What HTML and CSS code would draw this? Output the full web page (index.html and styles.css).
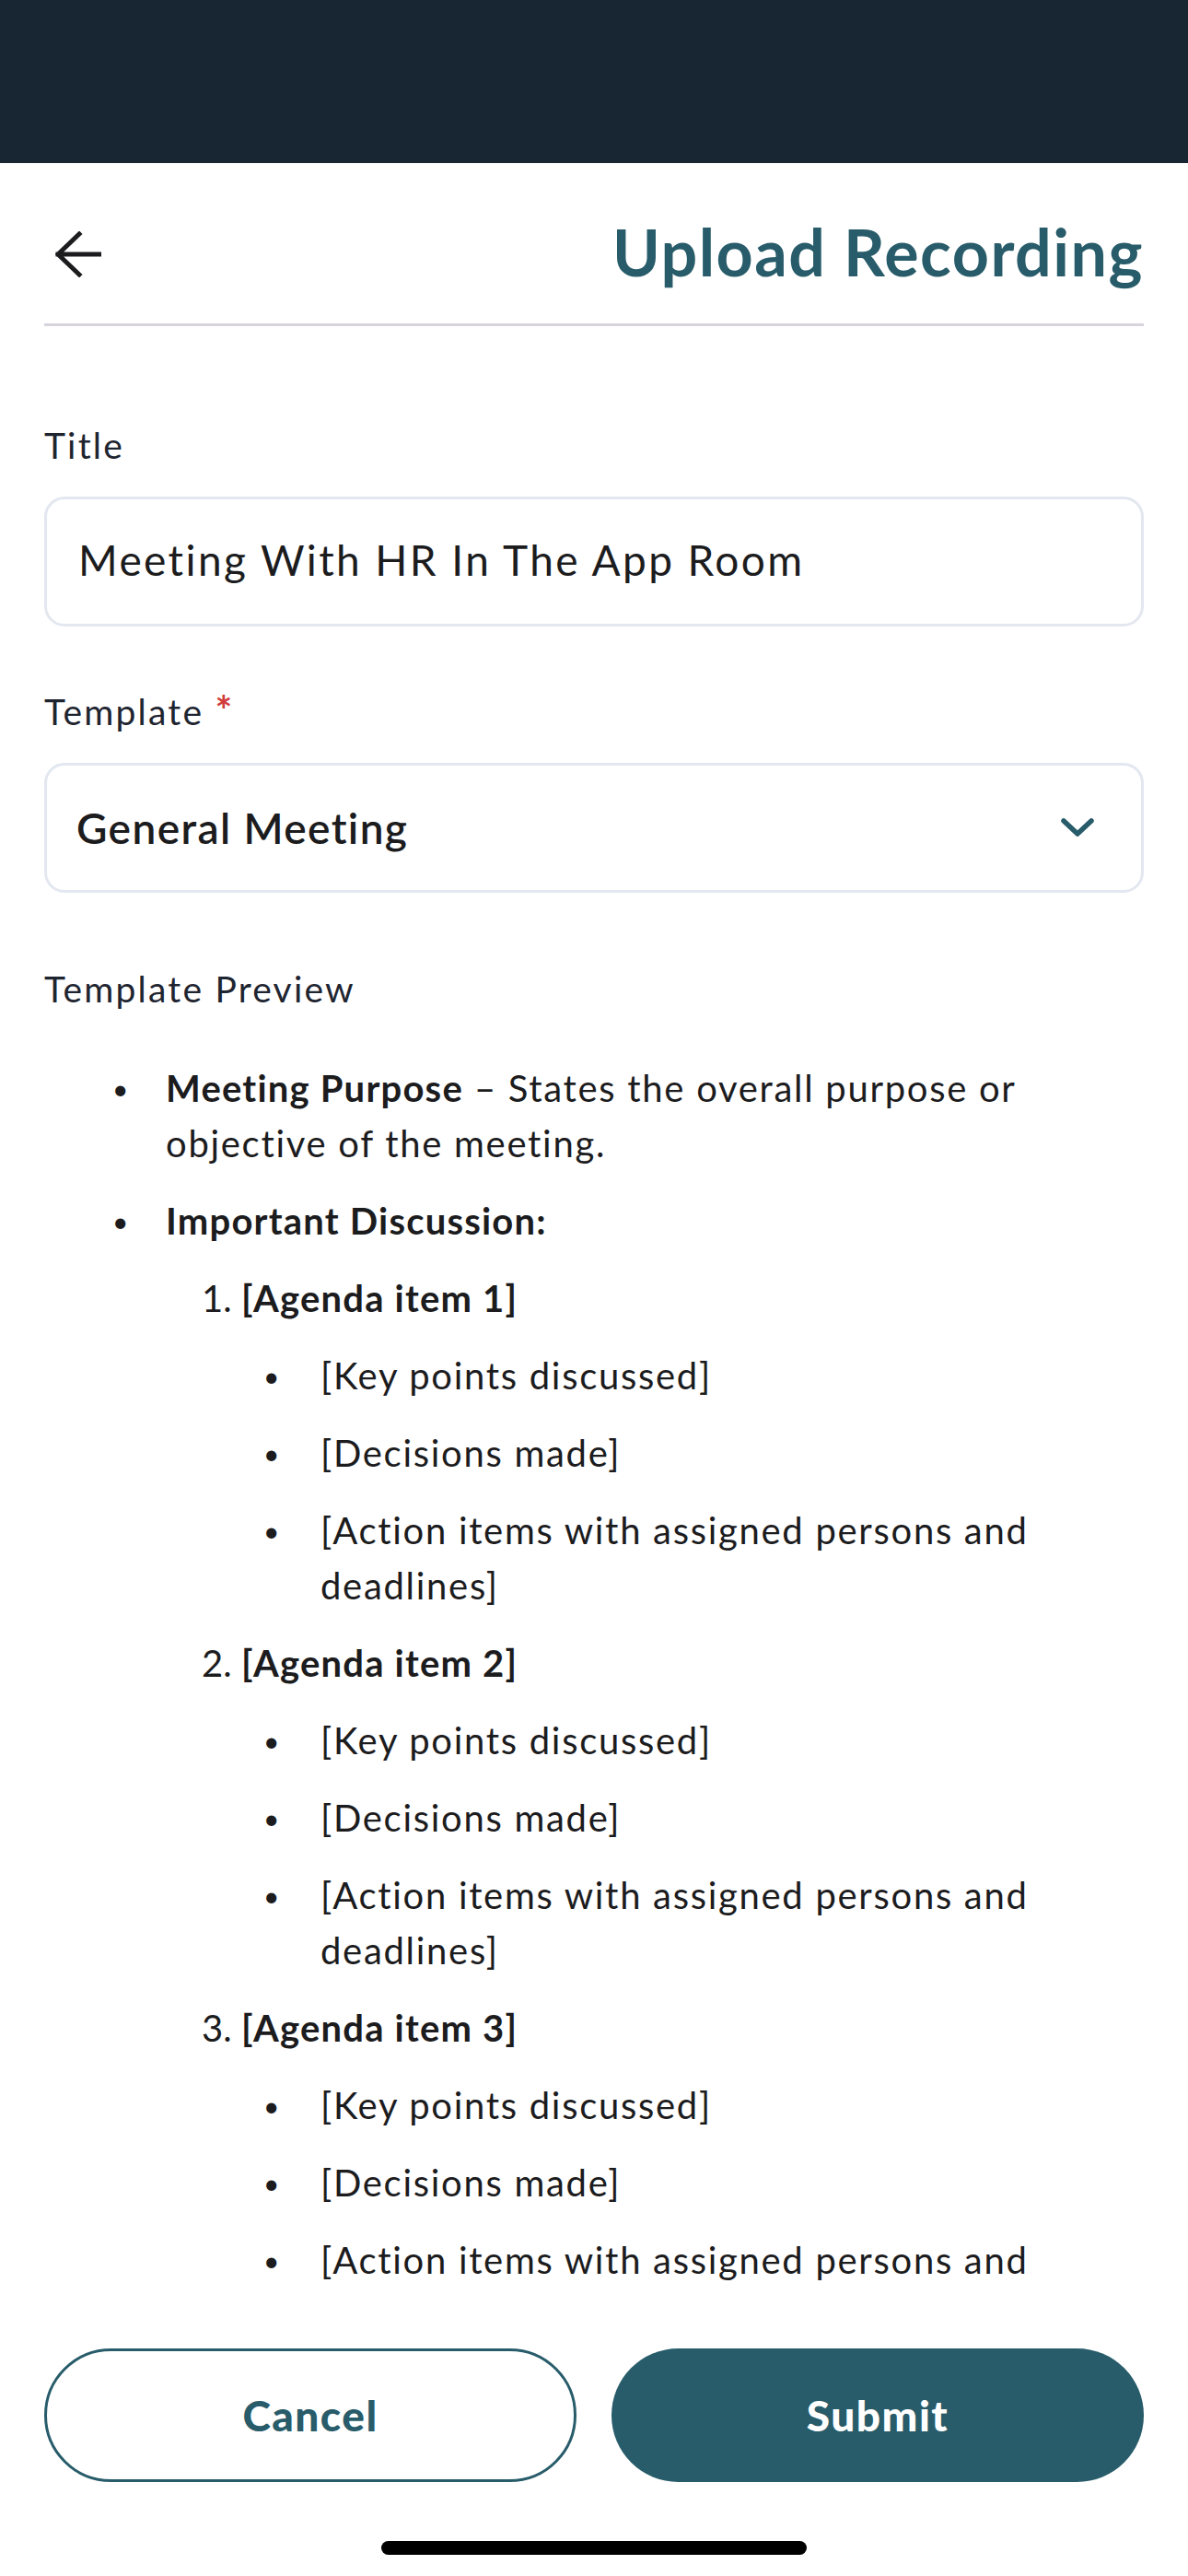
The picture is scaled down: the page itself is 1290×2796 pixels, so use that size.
FILE: index.html
```
<!DOCTYPE html>
<html lang="en">
<head>
<meta charset="utf-8">
<title>Upload Recording</title>
<link rel="stylesheet" href="styles.css">
</head>
<body>
<div class="screen">
  <div class="statusbar"></div>
  <div class="scroll">
    <header class="topbar">
      <button class="back" aria-label="Back">
        <svg width="50" height="50" viewBox="0 0 50 50"><path d="M26 3 L3 25 L26 47 M3 25 H49" fill="none" stroke="#1c1c1e" stroke-width="5" stroke-linecap="square" stroke-linejoin="miter"/></svg>
      </button>
      <h1 class="page-title">Upload Recording</h1>
    </header>
    <section class="form">
      <label class="label">Title</label>
      <div class="field">Meeting With HR In The App Room</div>
      <label class="label label-gap">Template <span class="req">*</span></label>
      <div class="field select">
        <span class="select-value">General Meeting</span>
        <svg class="chev" width="40" height="26" viewBox="0 0 40 26"><path d="M5 5 L20 19 L35 5" fill="none" stroke="#285c6a" stroke-width="5.5" stroke-linecap="round" stroke-linejoin="round"/></svg>
      </div>
      <div class="label preview-label">Template Preview</div>
      <ul class="preview">
        <li><b>Meeting Purpose</b> – States the overall purpose or objective of the meeting.</li>
        <li><b>Important Discussion:</b>
          <ol class="agenda">
            <li><b>[Agenda item 1]</b>
              <ul class="sub">
                <li>[Key points discussed]</li>
                <li>[Decisions made]</li>
                <li>[Action items with assigned persons and deadlines]</li>
              </ul>
            </li>
            <li><b>[Agenda item 2]</b>
              <ul class="sub">
                <li>[Key points discussed]</li>
                <li>[Decisions made]</li>
                <li>[Action items with assigned persons and deadlines]</li>
              </ul>
            </li>
            <li><b>[Agenda item 3]</b>
              <ul class="sub">
                <li>[Key points discussed]</li>
                <li>[Decisions made]</li>
                <li>[Action items with assigned persons and deadlines]</li>
              </ul>
            </li>
          </ol>
        </li>
      </ul>
    </section>
  </div>
  <footer class="footer">
    <div class="actions">
      <button class="btn btn-outline">Cancel</button>
      <button class="btn btn-fill">Submit</button>
    </div>
    <div class="home-indicator"></div>
  </footer>
</div>
</body>
</html>
```
FILE: styles.css
```
* { box-sizing: border-box; }
html, body { margin: 0; padding: 0; background: #ffffff; }
body {
  font-family: "Lato", "Liberation Sans", sans-serif;
  color: #1c1c1e;
}
.screen {
  width: 1290px;
  height: 2796px;
  display: flex;
  flex-direction: column;
  overflow: hidden;
}
.statusbar {
  height: 177px;
  flex: none;
  background: #182533;
}
.scroll {
  flex: 1;
  overflow: hidden;
  padding: 0 48px;
}
.topbar {
  height: 177px;
  padding-top: 46px;
  display: flex;
  align-items: flex-start;
  justify-content: space-between;
  border-bottom: 3px solid #d7d4de;
}
.back {
  border: 0;
  background: none;
  padding: 0;
  margin: 28px 0 0 12px;
  width: 50px;
  height: 50px;
  display: flex;
}
.page-title {
  margin: 0;
  font-size: 70px;
  line-height: 100px;
  font-weight: 700;
  color: #285c6a;
  letter-spacing: 1.5px;
}
.form {
  padding-top: 107px;
  display: flex;
  flex-direction: column;
}
.label {
  font-size: 39px;
  line-height: 44px;
  height: 44px;
  color: #1f2530;
  letter-spacing: 2.2px;
}
.label-gap { margin-top: 70px; }
.req {
  color: #d23b3b;
  font-size: 44px;
  font-weight: 700;
  line-height: 0;
}
.field {
  margin-top: 34px;
  height: 141px;
  border: 3px solid #e3e7ef;
  border-radius: 22px;
  padding: 0 34px 4px;
  display: flex;
  align-items: center;
  font-size: 46px;
  letter-spacing: 2.4px;
  color: #1c1c1e;
}
.select {
  justify-content: space-between;
  padding: 0 49px 0 32px;
}
.select-value {
  font-weight: 600;
  letter-spacing: 1.4px;
}
.chev { display: block; }
.preview-label { margin-top: 82px; }
.preview {
  list-style: none;
  margin: 56px 0 0;
  padding: 0 0 0 132px;
  font-size: 40px;
  line-height: 60px;
  color: #1c1c1e;
  letter-spacing: 1.7px;
}
.preview li { margin-top: 24px; }
.preview > li:first-child { margin-top: 0; }
.preview > li::before,
.sub > li::before {
  content: "•";
  display: inline-block;
  vertical-align: top;
  line-height: 60px;
  width: 58px;
  margin-left: -58px;
  font-size: 30px;
  letter-spacing: 0;
}
.preview b { font-weight: 700; letter-spacing: 1.2px; }
.agenda {
  list-style: none;
  counter-reset: agenda;
  margin: 0;
  padding: 0 0 0 82px;
}
.agenda > li { counter-increment: agenda; }
.agenda > li::before {
  content: counter(agenda) ".";
  display: inline-block;
  vertical-align: top;
  width: 43px;
  margin-left: -43px;
  letter-spacing: 0;
}
.sub {
  list-style: none;
  margin: 0;
  padding: 0 0 0 86px;
}
.sub > li::before {
  width: 62px;
  margin-left: -62px;
}
.footer {
  flex: none;
  height: 308px;
  padding: 61px 48px 0;
  background: #ffffff;
  display: flex;
  flex-direction: column;
  align-items: center;
}
.actions {
  width: 100%;
  display: grid;
  grid-template-columns: 1fr 1fr;
  gap: 38px;
}
.btn {
  height: 145px;
  border-radius: 73px;
  font-family: "Lato", "Liberation Sans", sans-serif;
  font-size: 46px;
  font-weight: 900;
  letter-spacing: 1.5px;
}
.btn-outline {
  background: #ffffff;
  border: 3px solid #285c6a;
  color: #285c6a;
}
.btn-fill {
  background: #285c6a;
  border: 0;
  color: #ffffff;
}
.home-indicator {
  margin-top: 64px;
  width: 462px;
  height: 15px;
  border-radius: 8px;
  background: #000000;
}
```
